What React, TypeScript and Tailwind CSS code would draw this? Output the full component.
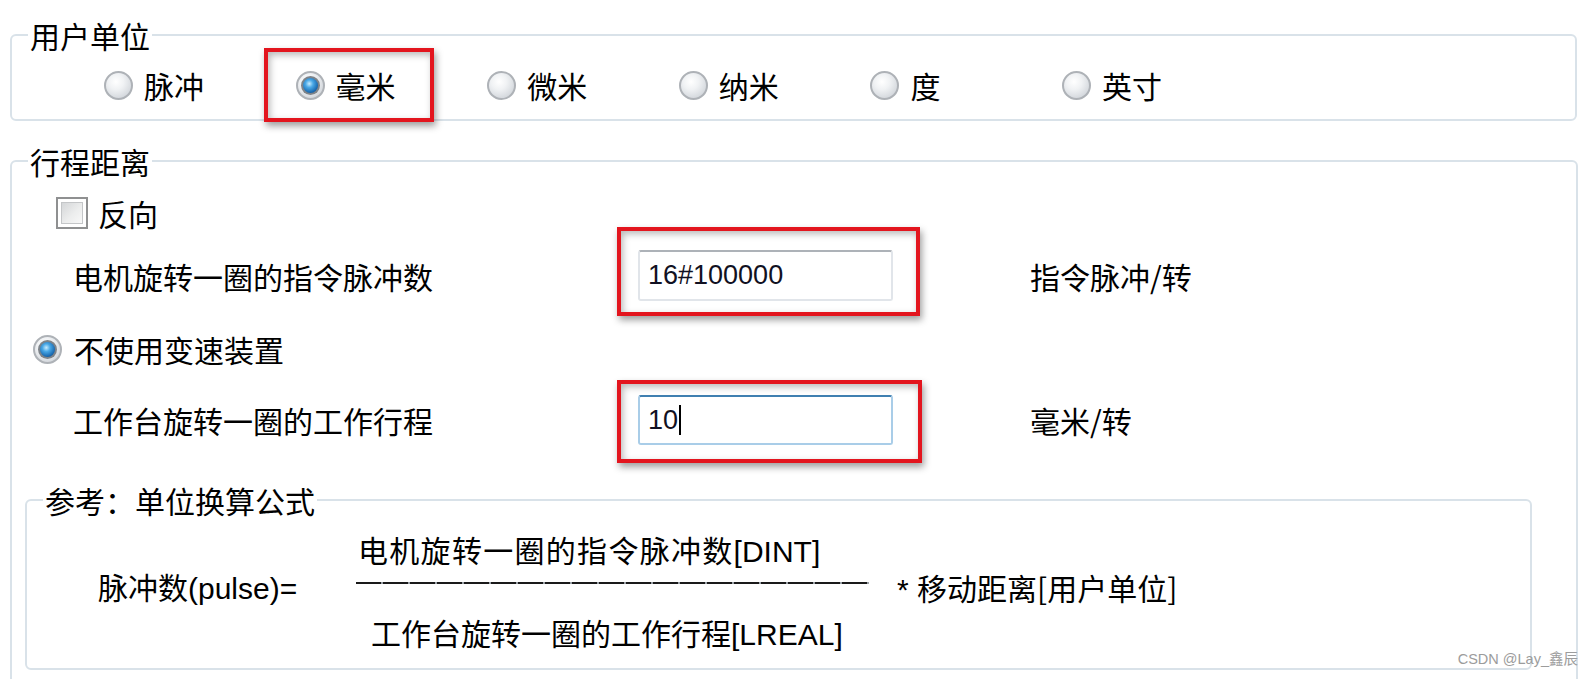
import React from "react";

function Radio({ checked }: { checked?: boolean }) {
  return (
    <span className="flex h-[29px] w-[29px] shrink-0 items-center justify-center rounded-full border-2 border-[#aeb2b7] bg-[radial-gradient(circle_at_40%_35%,#ffffff_0%,#f0f2f4_35%,#d3d7dc_78%,#bfc4ca_100%)]">
      {checked && (
        <span className="flex h-[19px] w-[19px] items-center justify-center rounded-full bg-[#7d8389]">
          <span className="h-[15px] w-[15px] rounded-full bg-[radial-gradient(circle_at_42%_38%,#c8ecff_0%,#49a8e6_30%,#1766ad_70%,#0b3a68_100%)]" />
        </span>
      )}
    </span>
  );
}

function Checkbox() {
  return (
    <span className="flex h-[32px] w-[32px] shrink-0 border-2 border-[#8f9091] bg-white p-[3px]">
      <span className="h-full w-full border border-[#c4c6c8] bg-[linear-gradient(135deg,#d4d6d8_0%,#eceded_55%,#f8f8f8_100%)]" />
    </span>
  );
}

function RedBox({ cls }: { cls: string }) {
  return (
    <span
      className={
        "pointer-events-none absolute border-[4px] border-[#e3151e] shadow-[2px_4px_7px_rgba(0,0,0,0.38),inset_2px_3px_7px_rgba(0,0,0,0.28)] " +
        cls
      }
    />
  );
}

const units = ["脉冲", "毫米", "微米", "纳米", "度", "英寸"];

export default function App() {
  return (
    <div className="relative h-[679px] w-[1594px] overflow-hidden bg-white text-black [font-family:'Noto_Sans_CJK_SC',sans-serif]">
      {/* 用户单位 */}
      <fieldset className="ml-[10px] mt-[20px] w-[1567px] rounded-[6px] border-2 border-[#d9e2e9] pb-[14px]">
        <legend className="ml-[16px] px-[2px] text-[30px] leading-[30px]">用户单位</legend>
        <div className="mt-[15px] flex h-[40px] items-center pl-[92px]">
          {units.map((u, i) => (
            <div key={u} className="relative flex w-[191.6px] items-center gap-[11px]">
              <Radio checked={i === 1} />
              <span className="text-[30px] leading-[30px]">{u}</span>
              {i === 1 && <RedBox cls="-left-[32px] -top-[22px] h-[74px] w-[170px]" />}
            </div>
          ))}
        </div>
      </fieldset>

      {/* 行程距离 */}
      <fieldset className="ml-[10px] mt-[25px] w-[1568px] rounded-[6px] border-2 border-[#d9e2e9] pb-[30px]">
        <legend className="ml-[16px] px-[2px] text-[30px] leading-[30px]">行程距离</legend>

        <div className="mt-[21px] flex h-[32px] items-center gap-[10px] pl-[44px]">
          <Checkbox />
          <span className="text-[30px] leading-[30px]">反向</span>
        </div>

        <div className="mt-[21px] flex h-[51px] items-center">
          <div className="w-[626px] pl-[61px] text-[30px] leading-[30px]">电机旋转一圈的指令脉冲数</div>
          <div className="relative flex h-[51px] w-[255px] items-center rounded-[3px] border-2 border-[#e1e5ea] border-t-[#adb2b8] bg-white pl-[8px]">
            <span className="text-[27px] leading-[27px] text-[#111122] [font-family:'Liberation_Sans',sans-serif]">16#100000</span>
            <RedBox cls="-left-[23px] -top-[25px] h-[89px] w-[303px]" />
          </div>
          <div className="ml-[137px] text-[30px] leading-[30px]">指令脉冲/转</div>
        </div>

        <div className="mt-[33px] flex h-[30px] items-center gap-[12px] pl-[21px]">
          <Radio checked />
          <span className="text-[30px] leading-[30px]">不使用变速装置</span>
        </div>

        <div className="mt-[31px] flex h-[50px] items-center">
          <div className="w-[626px] pl-[61px] text-[30px] leading-[30px]">工作台旋转一圈的工作行程</div>
          <div className="relative flex h-[50px] w-[255px] items-center rounded-[3px] border-2 border-[#a9cde8] border-t-[#3f7fb0] bg-white pl-[8px]">
            <span className="text-[27px] leading-[27px] text-[#111122] [font-family:'Liberation_Sans',sans-serif]">10</span>
            <span className="ml-[1px] h-[30px] w-[2px] bg-black" />
            <RedBox cls="-left-[23px] -top-[17px] h-[83px] w-[305px]" />
          </div>
          <div className="ml-[137px] text-[30px] leading-[30px]">毫米/转</div>
        </div>

        {/* 参考 */}
        <fieldset className="ml-[13px] mt-[40px] w-[1507px] rounded-[6px] border-2 border-[#d9e2e9] pb-[21px] pt-[19px]">
          <legend className="ml-[16px] px-[2px] text-[30px] leading-[30px]">参考：单位换算公式</legend>
          <div className="flex items-center pl-[71px]">
            <div className="mb-[6px] w-[258px] text-[30px] leading-[30px]">
              脉冲数<span className="[font-family:'Liberation_Sans',sans-serif]">(pulse)=</span>
            </div>
            <div className="flex flex-col">
              <div className="h-[30px] pl-[2px] text-[30px] leading-[30px] tracking-[1.3px]">
                电机旋转一圈的指令脉冲数<span className="tracking-normal [font-family:'Liberation_Sans',sans-serif]">[DINT]</span>
              </div>
              <div className="mt-[18px] h-[2px] w-[513px] bg-[repeating-linear-gradient(to_right,#1a1a1a_0px,#1a1a1a_25px,#9aa0a6_25px,#9aa0a6_27px)]" />
              <div className="mt-[33px] h-[30px] pl-[15px] text-[30px] leading-[30px]">
                工作台旋转一圈的工作行程<span className="[font-family:'Liberation_Sans',sans-serif]">[LREAL]</span>
              </div>
            </div>
            <div className="mb-[4px] ml-[28px] text-[30px] leading-[30px]">
              <span className="[font-family:'Liberation_Sans',sans-serif]">* </span>移动距离[用户单位]
            </div>
          </div>
        </fieldset>
      </fieldset>

      <div className="absolute bottom-[12px] right-[16px] text-[14.5px] leading-[15px] text-[#9c9c9c]">
        <span className="[font-family:'Liberation_Sans',sans-serif]">CSDN @Lay_</span>鑫辰
      </div>
    </div>
  );
}
